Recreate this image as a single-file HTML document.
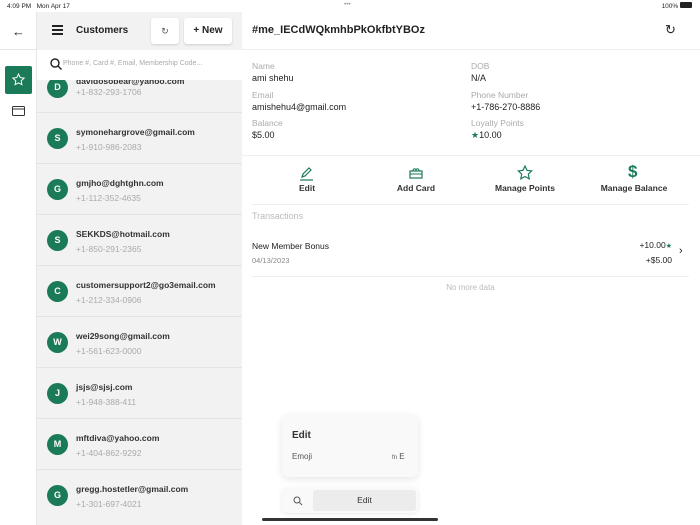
<!DOCTYPE html><html><head><style>
*{margin:0;padding:0;box-sizing:border-box}
body{width:700px;height:525px;overflow:hidden;font-family:"Liberation Sans",sans-serif;background:#fff;position:relative;color:#222}
.abs{position:absolute}
.g{color:#1b7a57}
.lbl{font-size:8.5px;color:#aaa}
.val{font-size:9px;color:#222}
.item{position:absolute;left:37px;width:205px;height:51px;border-bottom:1px solid #e4e4e4}
.av{position:absolute;left:10px;top:15px;width:21px;height:21px;border-radius:50%;background:#1b7a57;color:#fff;font-size:9px;font-weight:bold;text-align:center;line-height:21px}
.em{position:absolute;left:39px;top:14px;font-size:8.5px;font-weight:bold;color:#333}
.ph{position:absolute;left:39px;top:29px;font-size:8.5px;color:#aaa}
.act{position:absolute;top:183px;width:110px;text-align:center;font-size:8.5px;font-weight:bold;color:#333}
</style></head><body>
<div class="abs" style="left:0;top:0;width:700px;height:12px;font-size:6.5px;color:#222;padding:3px 7px">4:09 PM&nbsp;&nbsp;&nbsp;Mon Apr 17<span style="position:absolute;left:344px;top:1px;color:#999">•••</span><span style="position:absolute;right:8px;top:2px">100% <span style="display:inline-block;width:12px;height:6px;background:#222;border-radius:1px"></span></span></div>
<div class="abs" style="left:0;top:12px;width:37px;height:513px;background:#fff;border-right:1px solid #e6e6e6"></div>
<div class="abs" style="left:0;top:49px;width:37px;height:1px;background:#e6e6e6"></div>
<div class="abs" style="left:12px;top:24px;font-size:13px">&#8592;</div>
<div class="abs" style="left:5px;top:66px;width:27px;height:28px;background:#1b7a57;border-radius:2px"><svg width="27" height="28" viewBox="0 0 27 28"><path d="M13.5 8l1.7 3.6 3.9.5-2.9 2.7.7 3.9-3.4-1.9-3.4 1.9.7-3.9-2.9-2.7 3.9-.5z" fill="none" stroke="#fff" stroke-width="1"/></svg></div>
<svg class="abs" style="left:12px;top:106px" width="13" height="10"><rect x=".5" y=".5" width="12" height="9" rx="1" fill="none" stroke="#333"/><line x1="0" y1="3" x2="13" y2="3" stroke="#333"/></svg>
<div class="abs" style="left:37px;top:12px;width:205px;height:513px;background:#f2f2f2"></div>
<div class="abs" style="left:52px;top:25px;width:11px;height:10px;border-top:2px solid #222;border-bottom:2px solid #222"><div style="margin-top:2px;height:2px;background:#222"></div></div>
<div class="abs" style="left:76px;top:25px;font-size:10px;font-weight:bold">Customers</div>
<div class="abs" style="left:151px;top:18px;width:28px;height:26px;background:#fff;border-radius:3px;box-shadow:0 1px 2px rgba(0,0,0,.15);text-align:center;line-height:26px;font-size:9px;color:#555">&#8635;</div>
<div class="abs" style="left:184px;top:18px;width:48px;height:26px;background:#fff;border-radius:3px;box-shadow:0 1px 2px rgba(0,0,0,.15);text-align:center;line-height:26px;font-size:10px;font-weight:bold">+ New</div>
<div class="item" style="top:80px;height:33px;overflow:hidden"><div class="av" style="top:-3px">D</div><div class="em" style="top:-4px">davidosobear@yahoo.com</div><div class="ph" style="top:7px">+1-832-293-1706</div></div>
<div class="abs" style="left:37px;top:50px;width:205px;height:30px;background:#fff"></div>
<svg class="abs" style="left:50px;top:58px" width="12" height="12"><circle cx="5" cy="5" r="4" fill="none" stroke="#222" stroke-width="1.4"/><line x1="8" y1="8" x2="11.5" y2="11.5" stroke="#222" stroke-width="1.4"/></svg>
<div class="abs" style="left:63px;top:60px;font-size:7px;color:#aaa">Phone #, Card #, Email, Membership Code...</div>
<div class="item" style="top:113px"><div class="av">S</div><div class="em">symonehargrove@gmail.com</div><div class="ph">+1-910-986-2083</div></div>
<div class="item" style="top:164px"><div class="av">G</div><div class="em">gmjho@dghtghn.com</div><div class="ph">+1-112-352-4635</div></div>
<div class="item" style="top:215px"><div class="av">S</div><div class="em">SEKKDS@hotmail.com</div><div class="ph">+1-850-291-2365</div></div>
<div class="item" style="top:266px"><div class="av">C</div><div class="em">customersupport2@go3email.com</div><div class="ph">+1-212-334-0906</div></div>
<div class="item" style="top:317px"><div class="av">W</div><div class="em">wei29song@gmail.com</div><div class="ph">+1-561-623-0000</div></div>
<div class="item" style="top:368px"><div class="av">J</div><div class="em">jsjs@sjsj.com</div><div class="ph">+1-948-388-411</div></div>
<div class="item" style="top:419px"><div class="av">M</div><div class="em">mftdiva@yahoo.com</div><div class="ph">+1-404-862-9292</div></div>
<div class="item" style="top:470px;border:0"><div class="av">G</div><div class="em">gregg.hostetler@gmail.com</div><div class="ph">+1-301-697-4021</div></div>
<div class="abs" style="left:252px;top:24px;font-size:11px;font-weight:bold">#me_IECdWQkmhbPkOkfbtYBOz</div>
<div class="abs" style="left:665px;top:22px;font-size:13px">&#8635;</div>
<div class="abs" style="left:242px;top:49px;width:458px;height:1px;background:#eee"></div>
<div class="abs lbl" style="left:252px;top:61px">Name</div><div class="abs val" style="left:252px;top:73px">ami shehu</div>
<div class="abs lbl" style="left:252px;top:90px">Email</div><div class="abs val" style="left:252px;top:102px">amishehu4@gmail.com</div>
<div class="abs lbl" style="left:252px;top:118px">Balance</div><div class="abs val" style="left:252px;top:130px">$5.00</div>
<div class="abs lbl" style="left:471px;top:61px">DOB</div><div class="abs val" style="left:471px;top:73px">N/A</div>
<div class="abs lbl" style="left:471px;top:90px">Phone Number</div><div class="abs val" style="left:471px;top:102px">+1-786-270-8886</div>
<div class="abs lbl" style="left:471px;top:118px">Loyalty Points</div><div class="abs val" style="left:471px;top:130px"><span class="g">&#9733;</span>10.00</div>
<div class="abs" style="left:242px;top:155px;width:458px;height:1px;background:#eee"></div>
<svg class="abs" style="left:299px;top:166px" width="15" height="15"><path d="M3 11l1-3 6-6 2 2-6 6z" fill="none" stroke="#1b7a57" stroke-width="1.2"/><line x1="1" y1="14" x2="14" y2="14" stroke="#1b7a57" stroke-width="1.2"/></svg>
<svg class="abs" style="left:409px;top:166px" width="14" height="13"><rect x="1" y="5" width="12" height="7" fill="none" stroke="#1b7a57" stroke-width="1.2"/><line x1="1" y1="8" x2="13" y2="8" stroke="#1b7a57"/><path d="M4 5c0-3 3-3 3 0c0-3 3-3 3 0" fill="none" stroke="#1b7a57"/></svg>
<svg class="abs" style="left:517px;top:165px" width="16" height="15"><path d="M8 1l2 4.3 4.7.6-3.4 3.2.9 4.7L8 11.5l-4.2 2.3.9-4.7L1.3 5.9 6 5.3z" fill="none" stroke="#1b7a57" stroke-width="1.2"/></svg>
<div class="abs g" style="left:628px;top:162px;font-size:17px;font-weight:bold;line-height:20px">$</div>
<div class="act" style="left:252px">Edit</div><div class="act" style="left:361px">Add Card</div><div class="act" style="left:470px">Manage Points</div><div class="act" style="left:579px">Manage Balance</div>
<div class="abs" style="left:252px;top:204px;width:437px;height:1px;background:#eee"></div>
<div class="abs" style="left:252px;top:211px;font-size:9px;color:#bbb">Transactions</div>
<div class="abs" style="left:252px;top:241px;font-size:8.5px">New Member Bonus</div>
<div class="abs" style="left:252px;top:256px;font-size:7.5px;color:#888">04/13/2023</div>
<div class="abs" style="left:620px;top:240px;width:52px;text-align:right;font-size:8.5px">+10.00<span class="g" style="font-size:7px">&#9733;</span></div>
<div class="abs" style="left:620px;top:255px;width:52px;text-align:right;font-size:8.5px">+$5.00</div>
<div class="abs" style="left:679px;top:245px;font-size:11px">&#8250;</div>
<div class="abs" style="left:252px;top:276px;width:437px;height:1px;background:#eee"></div>
<div class="abs" style="left:252px;top:283px;width:437px;text-align:center;font-size:8px;color:#bbb">No more data</div>
<div class="abs" style="left:282px;top:415px;width:136px;height:62px;background:#f9f9f9;border-radius:6px;box-shadow:0 2px 8px rgba(0,0,0,.1)"></div>
<div class="abs" style="left:292px;top:430px;font-size:10px;font-weight:bold;color:#333">Edit</div>
<div class="abs" style="left:292px;top:452px;font-size:8px;color:#555">Emoji</div>
<div class="abs" style="left:392px;top:452px;font-size:8px;color:#555"><span style="font-size:6px">fn</span> E</div>
<div class="abs" style="left:282px;top:488px;width:136px;height:25px;background:#f9f9f9;border-radius:5px;box-shadow:0 1px 5px rgba(0,0,0,.1)"></div>
<svg class="abs" style="left:293px;top:496px" width="10" height="10"><circle cx="4" cy="4" r="3" fill="none" stroke="#555"/><line x1="6.5" y1="6.5" x2="9" y2="9" stroke="#555"/></svg>
<div class="abs" style="left:313px;top:490px;width:103px;height:21px;background:#ececec;border-radius:3px;text-align:center;line-height:21px;font-size:8.5px;color:#333">Edit</div>
<div class="abs" style="left:262px;top:518px;width:176px;height:3px;background:#333;border-radius:2px"></div>
</body></html>
